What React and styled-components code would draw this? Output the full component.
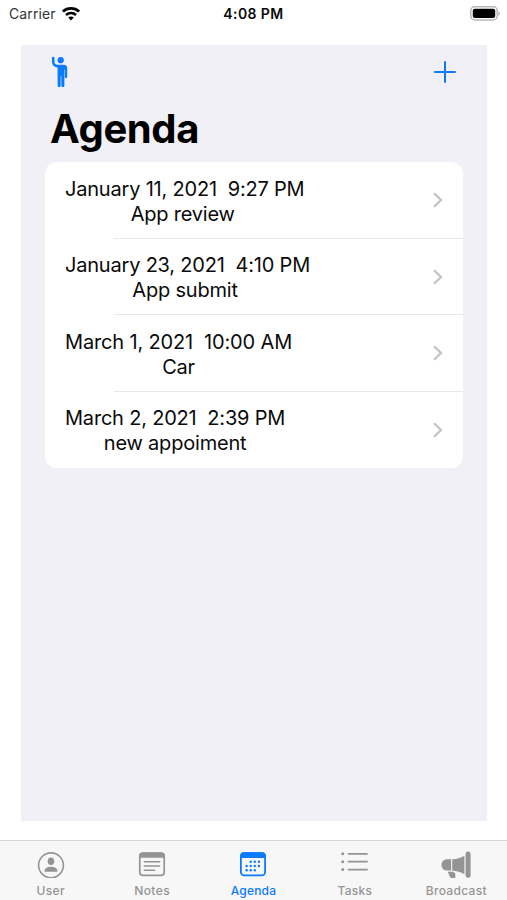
import React, { useState } from "react";
import styled, { createGlobalStyle } from "styled-components";

const GlobalStyle = createGlobalStyle`
  * {
    box-sizing: border-box;
  }

  body {
    margin: 0;
    background-color: #ffffff;
    font-family: Inter, "Liberation Sans", sans-serif;
    color: #0a0a0a;
  }
`;

const Screen = styled.div`
  display: flex;
  flex-direction: column;
  width: 507px;
  height: 900px;
  overflow: hidden;
`;

const StatusBar = styled.header`
  display: grid;
  grid-template-columns: 1fr auto 1fr;
  align-items: center;
  height: 45px;
  padding: 0 7px 18px 9px;
`;

const Carrier = styled.div`
  display: flex;
  align-items: center;
  gap: 6px;
  font-size: 14px;
  letter-spacing: 0.1px;
  color: #333333;
`;

const Clock = styled.div`
  padding-right: 2px;
  font-size: 14px;
  font-weight: 600;
  letter-spacing: 0.4px;
`;

const BatterySlot = styled.div`
  display: flex;
  justify-content: flex-end;
`;

const Panel = styled.main`
  width: 466px;
  height: 776px;
  margin: 0 0 19px 21px;
  padding: 0 24px;
  background-color: #f1f0f6;
`;

const NavBar = styled.div`
  display: flex;
  align-items: center;
  justify-content: space-between;
  height: 54px;
  padding: 0 7px 0 6px;
`;

const NavButton = styled.button`
  display: flex;
  padding: 0;
  border: none;
  background: none;
  color: #0a7aff;
`;

const Title = styled.h1`
  height: 63px;
  margin: 0;
  padding-left: 5px;
  font-size: 40px;
  font-weight: 700;
  line-height: 60px;
  letter-spacing: -0.4px;
  color: #000000;
`;

const List = styled.ul`
  width: 418px;
  margin: 0;
  padding: 0;
  list-style: none;
  border-radius: 12px;
  background-color: #ffffff;
`;

const Row = styled.li`
  display: flex;
  align-items: center;
  justify-content: space-between;
  height: 76.5px;
  padding: 0 19px 0 20px;

  /* 구분선은 안쪽에서 시작 */
  background-image: linear-gradient(#e8e8ea, #e8e8ea);
  background-repeat: no-repeat;
  background-position: right bottom;
  background-size: 349px 1px;

  &:last-child {
    background-image: none;
  }
`;

const Appointment = styled.div`
  display: flex;
  flex-direction: column;
  align-items: center;
  padding-top: 3px;
  font-size: 20px;
  line-height: 25px;
  white-space: pre;
`;

const When = styled.span`
  letter-spacing: ${(props) => props.$tracking}px;
`;

const What = styled.span`
  margin-right: ${(props) => props.$shift}px;
  letter-spacing: -0.2px;
`;

const TabBar = styled.nav`
  display: grid;
  grid-template-columns: repeat(5, 1fr);
  height: 60px;
  border-top: 1px solid #d5d5d5;
  background-color: #f7f7f7;
`;

const Tab = styled.button`
  display: flex;
  flex-direction: column;
  align-items: center;
  padding: 7px 0 0;
  border: none;
  background: none;
  color: ${(props) => (props.$active ? "#0a7aff" : "#949494")};
  font-family: inherit;
  font-size: 12px;
  font-weight: 500;
  line-height: 16px;
  letter-spacing: ${(props) => props.$tracking}px;

  svg {
    margin-bottom: 5px;
  }
`;

const WifiIcon = () => (
  <svg width="18" height="14" viewBox="0 0 18 14" fill="none" stroke="#050505">
    <path d="M.9 4.6C5.3.4 12.7.4 17.1 4.6" strokeWidth="2.7" />
    <path d="M4 8c2.8-2.800 7.200-2.800 10 0" strokeWidth="2.500" />
    <path d="M9 13.4 6.200 10.600c1.600-1.400 4-1.400 5.600 0Z" fill="#050505" stroke="none" />
  </svg>
);

const BatteryIcon = () => (
  <svg width="30" height="15" viewBox="0 0 30 15">
    <rect x=".8" y=".8" width="26.4" height="13.2" rx="4" fill="#fff" stroke="#b7b7b7" strokeWidth="1.5" />
    <rect x="2.8" y="2.8" width="22.4" height="9.2" rx="2" fill="#000" />
    <path d="M28.400 5.200c2.100.8 2.100 3.800 0 4.600Z" fill="#b7b7b7" />
  </svg>
);

const WaveIcon = () => (
  <svg width="17" height="32" viewBox="0 0 17 32" fill="none" stroke="currentColor">
    <circle cx="9.7" cy="4.2" r="3.1" fill="currentColor" stroke="none" />
    <path d="M2.2 2v3.500c0 2.800 1.600 4.600 5 5" strokeWidth="2.500" strokeLinecap="round" />
    <path
      d="M5.500 8.800h7.300c2.100 0 3.400 1.300 3.400 3.400v8.800a1.100 1.100 0 0 1-2.300 0V13.500h-.5v16.100a1.500 1.500 0 0 1-3.100 0V20.300h-.6v9.300a1.500 1.500 0 0 1-3.100 0V11Z"
      fill="currentColor"
      stroke="none"
    />
  </svg>
);

const PlusIcon = () => (
  <svg width="22" height="22" viewBox="0 0 22 22" stroke="currentColor" strokeWidth="2" strokeLinecap="round">
    <path d="M11 1v20M1 11h20" />
  </svg>
);

const ChevronIcon = () => (
  <svg width="12" height="18" viewBox="0 0 12 18" fill="none" stroke="#c3c3c5" strokeWidth="2.3">
    <path d="m2 2.2 7 6.8-7 6.8" />
  </svg>
);

const UserIcon = () => (
  <svg width="28" height="30" viewBox="0 0 28 30" fill="currentColor">
    <circle cx="14" cy="17.3" r="12.4" fill="none" stroke="currentColor" strokeWidth="1.6" />
    <ellipse cx="14" cy="13.2" rx="3.3" ry="3.8" />
    <path d="M7.400 23c.5-3 3-4.300 6.600-4.300s6.100 1.300 6.600 4.300c0 .5-.2.700-.7.700H8.100c-.5 0-.7-.2-.7-.7Z" />
  </svg>
);

const NotesIcon = () => (
  <svg width="28" height="30" viewBox="0 0 28 30" fill="none" stroke="currentColor">
    <rect x="1.8" y="5.2" width="24.4" height="22.2" rx="3.2" strokeWidth="1.7" />
    <path d="M1 9.8V8c0-2.200 1.400-3.600 3.600-3.600h18.800C25.600 4.400 27 5.800 27 8v1.800Z" fill="currentColor" stroke="none" />
    <path d="M6.300 13.700h15.400M6.300 18h15.400M6.300 22.300h10.500" strokeWidth="1.400" strokeLinecap="round" />
  </svg>
);

const CALENDAR_DOTS = [
  { y: 13.8, xs: [11.7, 15.8, 19.9] },
  { y: 18, xs: [7.6, 11.7, 15.8, 19.9] },
  { y: 22.2, xs: [7.6, 11.7, 15.8] },
];

const AgendaIcon = () => (
  <svg width="28" height="30" viewBox="0 0 28 30" fill="currentColor">
    <rect x="1.900" y="5.200" width="24.200" height="22.200" rx="3.400" fill="none" stroke="currentColor" strokeWidth="1.800" />
    <path d="M1 10V8c0-2.400 1.400-3.800 3.800-3.800h18.400C25.600 4.200 27 5.600 27 8v2Z" />
    {CALENDAR_DOTS.map((line) =>
      line.xs.map((x) => <circle key={`${x}-${line.y}`} cx={x} cy={line.y} r="1.200" />)
    )}
  </svg>
);

const TasksIcon = () => (
  <svg width="28" height="30" viewBox="0 0 28 30" fill="currentColor" stroke="currentColor">
    {[5.8, 13.7, 21.6].map((y) => (
      <g key={y}>
        <circle cx="1.700" cy={y} r="1.500" stroke="none" />
        <path d={`M7.500 ${y}h18.500`} strokeWidth="1.800" strokeLinecap="round" />
      </g>
    ))}
  </svg>
);

const BroadcastIcon = () => (
  <svg width="30" height="30" viewBox="0 0 30 30" fill="currentColor">
    <rect x="24.600" y="3.600" width="5" height="26.200" rx="2.300" />
    <path d="M11.200 11.300c4.500-.4 8.500-1.500 12.200-3.600v18.500c-3.700-2.200-7.700-3.400-12.200-3.700Z" />
    <path d="M10.100 11.300v11.200H6.500c-3.800 0-6-2.300-6-5.600s2.200-5.600 6-5.600Z" />
    <path d="M6.800 23.800h5.500l2 1.800v4.400h-3.200c-1.400 0-2.100-.6-2.500-1.800Z" />
  </svg>
);

const APPOINTMENTS = [
  { date: "January 11, 2021", time: "9:27 PM", name: "App review", shift: 4 },
  { date: "January 23, 2021", time: "4:10 PM", name: "App submit", shift: 5 },
  { date: "March 1, 2021", time: "10:00 AM", name: "Car", shift: 0 },
  { date: "March 2, 2021", time: "2:39 PM", name: "new appoiment", shift: 0 },
];

const TABS = [
  { label: "User", Icon: UserIcon, tracking: 0.4 },
  { label: "Notes", Icon: NotesIcon, tracking: 0.4 },
  { label: "Agenda", Icon: AgendaIcon, tracking: 0.2 },
  { label: "Tasks", Icon: TasksIcon, tracking: 0.3 },
  { label: "Broadcast", Icon: BroadcastIcon, tracking: 0.3 },
];

const App = () => {
  const [activeTab, setActiveTab] = useState("Agenda");

  return (
    <Screen>
      <GlobalStyle />
      <StatusBar>
        <Carrier>
          Carrier
          <WifiIcon />
        </Carrier>
        <Clock>4:08 PM</Clock>
        <BatterySlot>
          <BatteryIcon />
        </BatterySlot>
      </StatusBar>

      <Panel>
        <NavBar>
          <NavButton aria-label="Sign out">
            <WaveIcon />
          </NavButton>
          <NavButton aria-label="Add appointment">
            <PlusIcon />
          </NavButton>
        </NavBar>
        <Title>Agenda</Title>
        <List>
          {APPOINTMENTS.map((item) => (
            <Row key={item.name}>
              <Appointment>
                <When $tracking={item.name === "Car" ? -0.15 : -0.2}>
                  {`${item.date}  ${item.time}`}
                </When>
                <What $shift={item.shift}>{item.name}</What>
              </Appointment>
              <ChevronIcon />
            </Row>
          ))}
        </List>
      </Panel>

      <TabBar>
        {TABS.map(({ label, Icon, tracking }) => (
          <Tab
            key={label}
            $active={label === activeTab}
            $tracking={tracking}
            onClick={() => setActiveTab(label)}
          >
            <Icon />
            {label}
          </Tab>
        ))}
      </TabBar>
    </Screen>
  );
};

export default App;
